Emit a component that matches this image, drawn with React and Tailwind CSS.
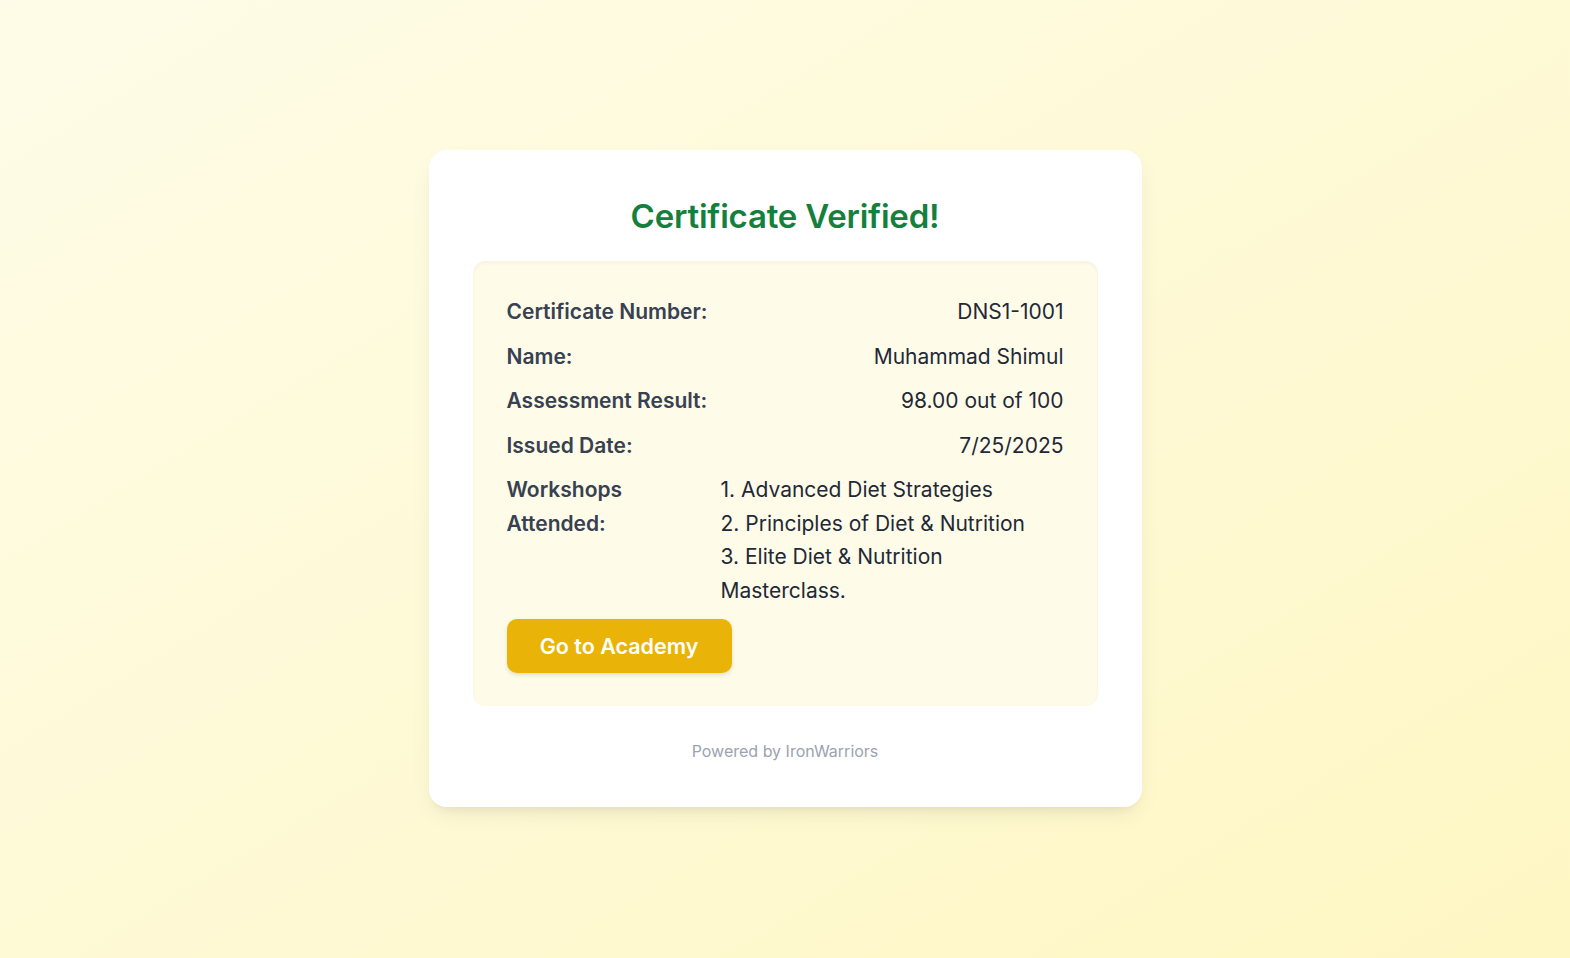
export default function App() {
  const rows = [
    ["Certificate Number:", "DNS1-1001"],
    ["Name:", "Muhammad Shimul"],
    ["Assessment Result:", "98.00 out of 100"],
    ["Issued Date:", "7/25/2025"],
  ];
  const workshops = [
    "1. Advanced Diet Strategies",
    "2. Principles of Diet & Nutrition",
    "3. Elite Diet & Nutrition Masterclass.",
  ];

  return (
    <div
      className="min-h-screen w-full flex items-start justify-center pt-[150px] bg-gradient-to-br from-[#fefce8] to-[#fef7c3]"
      style={{ fontFamily: "Inter, 'Noto Sans', sans-serif" }}
    >
      <div className="w-[713px] bg-white rounded-[18px] shadow-[0_10px_25px_-5px_rgba(0,0,0,0.08),0_8px_10px_-6px_rgba(0,0,0,0.06)] p-[44px]">
        <h1 className="text-center text-[33px] leading-[44px] font-semibold text-[#15803d] tracking-[-0.2px]">
          Certificate Verified!
        </h1>

        {/* Details box */}
        <div className="mt-[23px] rounded-xl bg-[#fefbe8] shadow-[inset_0_2px_4px_rgba(0,0,0,0.04)] px-[34px] pt-[34px] pb-[33px]">
          <div className="flex flex-col gap-[11.5px] text-[21px] leading-[33px]">
            {rows.map(([label, value]) => (
              <div key={label} className="flex justify-between">
                <span className="font-semibold text-[#374151]">{label}</span>
                <span className="text-[#1f2937]">{value}</span>
              </div>
            ))}
            <div className="flex leading-[33.5px]">
              <span className="w-[214px] shrink-0 font-semibold text-[#374151]">
                Workshops
                <br />
                Attended:
              </span>
              <div className="w-[325px] text-[#1f2937]">
                {workshops.map((w) => (
                  <div key={w}>{w}</div>
                ))}
              </div>
            </div>
          </div>

          <button className="mt-[12px] w-[225px] h-[54px] rounded-[10px] bg-[#eab308] text-white text-[21.5px] font-semibold shadow-[0_2px_4px_rgba(0,0,0,0.12)]">
            Go to Academy
          </button>
        </div>

        <p className="mt-[33px] text-center text-[16px] leading-[24px] text-[#9ca3af]">
          Powered by IronWarriors
        </p>
      </div>
    </div>
  );
}
